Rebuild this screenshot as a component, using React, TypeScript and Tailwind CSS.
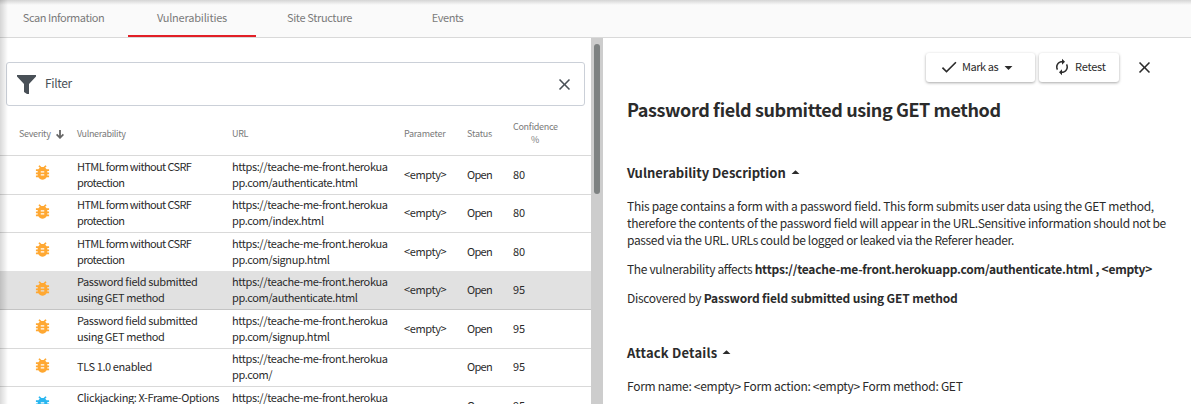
import React from "react";
import { MdArrowDropDown, MdArrowDropUp, MdAutorenew, MdCheck, MdClose } from "react-icons/md";

type Row = { name: string[]; url: string[]; param: string; confidence: string; tight?: boolean; info?: boolean; selected?: boolean };

const host = "https://teache-me-front.herokua";
const rows: Row[] = [
  { name: ["HTML form without CSRF", "protection"], url: [host, "pp.com/authenticate.html"], param: "<empty>", confidence: "80", tight: true },
  { name: ["HTML form without CSRF", "protection"], url: [host, "pp.com/index.html"], param: "<empty>", confidence: "80", tight: true },
  { name: ["HTML form without CSRF", "protection"], url: [host, "pp.com/signup.html"], param: "<empty>", confidence: "80", tight: true },
  { name: ["Password field submitted", "using GET method"], url: [host, "pp.com/authenticate.html"], param: "<empty>", confidence: "95", selected: true },
  { name: ["Password field submitted", "using GET method"], url: [host, "pp.com/signup.html"], param: "<empty>", confidence: "95" },
  { name: ["TLS 1.0 enabled"], url: [host, "pp.com/"], param: "", confidence: "95" },
  { name: ["Clickjacking: X-Frame-Options", "header missing"], url: [host, "pp.com/"], param: "", confidence: "95", info: true },
];

const tabs = [
  { label: "Scan Information", style: "pr-px tracking-[-0.44px]" },
  { label: "Vulnerabilities", style: "tracking-[-0.2px] border-b-2 border-[#e21f26]" },
  { label: "Site Structure", style: "pr-px tracking-[-0.36px]" },
  { label: "Events", style: "pr-px tracking-[-0.4px]" },
];

const columns = "grid grid-cols-[77px_155px_172px_63px_46px_78px] items-center";

function Bug({ className }: { className: string }) {
  return (
    <svg className={className} viewBox="0 0 24 24" fill="currentColor">
      <path d="M20.3 7.9h-3.1c-.45-.78-1.07-1.35-1.82-1.86L17.2 4.2 15.7 2.8l-2.28 2.37C12.96 5.06 12.49 5 12 5c-.49 0-.96.06-1.41.17L8.3 2.8 6.8 4.2l1.82 1.84C7.88 6.55 7.26 7.12 6.81 7.9H3.7v2.2h2.3c-.05.33-.1.66-.1.9v.9H3.7v2.2h2.2v.9c0 .34.05.67.1.9H3.7v2.2h3.11c1.04 1.79 2.97 3 5.19 3s4.15-1.21 5.19-3h3.11v-2.2h-2.3c.05-.33.1-.66.1-.9v-.9h2.2v-2.2h-2.2V11c0-.34-.05-.67-.1-.9h2.3V7.9zM14.2 15.7H9.8v-1.6h4.4v1.6zm0-3.8H9.8v-1.6h4.4v1.6z" />
    </svg>
  );
}

function Lines({ lines }: { lines: string[] }) {
  return (
    <div>
      {lines.map((line) => (
        <div key={line} className="whitespace-nowrap">{line}</div>
      ))}
    </div>
  );
}

function Tabs() {
  return (
    <nav className="flex h-[38px] shrink-0 border-b border-[#d9d9d9] bg-[#fafafa] text-[11px] leading-[35px] text-[#7a7a7a]">
      {tabs.map((tab) => (
        <div key={tab.label} className={`w-32 text-center ${tab.style}`}>{tab.label}</div>
      ))}
    </nav>
  );
}

function VulnerabilityList() {
  return (
    <section className="w-[591px] shrink-0 overflow-hidden">
      <div className="mt-6 ml-1.5 flex h-11 w-[579px] items-center rounded-[3px] border border-[#cbd0d8] pr-2.5 pl-2.5">
        <svg className="h-[19px] w-[19px] shrink-0" viewBox="0 0 19 19" fill="#495057">
          <path d="M0 0H19V1.5L12 9V19H10L7 17V9L0 1.5Z" />
        </svg>
        <span className="mb-0.5 ml-[9px] flex-1 text-[12px] tracking-[-0.35px] text-[#495057]">Filter</span>
        <MdClose className="h-[19px] w-[19px] text-[#495057]" />
      </div>
      <div className={`${columns} mt-0.5 h-[47px] text-[9px] leading-[13px] tracking-[-0.32px] text-[#7a7a7a]`}>
        <div className="flex items-center pt-1 pl-[19px]">
          Severity
          <svg className="mt-0.5 ml-[5px] h-[9px] w-2" viewBox="0 0 8 9" fill="none" stroke="#666666" strokeWidth="1.8">
            <path d="M4 0V8M.6 4.4L4 7.8L7.4 4.4" />
          </svg>
        </div>
        <div className="pt-1">Vulnerability</div>
        <div className="pt-1">URL</div>
        <div className="pt-1 tracking-[-0.24px]">Parameter</div>
        <div className="pt-1 tracking-[-0.2px]">Status</div>
        <div className="w-11 pt-0.5 text-center">Confidence %</div>
      </div>
      {rows.map((row, index) => (
        <div
          key={index}
          className={`${columns} h-[38.5px] border-t pb-0.5 text-[11px] leading-4 tracking-[-0.4px] text-[#2b2b2b] ${row.selected ? "border-[#e1e1e1] bg-[#e1e1e1]" : index === 4 ? "border-[#c4c4c4]" : "border-[#d9d9d9]"}`}
        >
          <Bug className={`mb-0.5 ml-[33px] h-[19px] w-[19px] ${row.info ? "text-[#29b6f0]" : "text-[#ffa832]"}`} />
          <div className={row.tight ? "tracking-[-0.62px]" : ""}>
            <Lines lines={row.name} />
          </div>
          <Lines lines={row.url} />
          <div>{row.param}</div>
          <div className="tracking-[-0.7px]">Open</div>
          <div className="tracking-[-0.2px]">{row.confidence}</div>
        </div>
      ))}
    </section>
  );
}

function Details() {
  return (
    <section className="flex-1 overflow-hidden pl-6 text-[12px] leading-[17px] tracking-[-0.29px] text-[#2b2b2b]">
      <div className="mt-3.5 flex h-[30px] items-center justify-end pr-[37px] text-[11px]">
        <div className="flex h-[29px] w-[109px] items-center rounded-[3px] pl-[13px] shadow-[0_1px_3px_rgba(0,0,0,0.35)]">
          <MdCheck className="h-5 w-5" />
          <span className="mb-px ml-[3px] tracking-[-0.45px]">Mark as</span>
          <MdArrowDropDown className="ml-px h-[19px] w-[19px]" />
        </div>
        <div className="ml-1 flex h-[29px] w-20 items-center rounded-[3px] pl-[14px] shadow-[0_1px_3px_rgba(0,0,0,0.35)]">
          <MdAutorenew className="h-[18px] w-[18px]" />
          <span className="mb-px ml-1 tracking-[-0.2px]">Retest</span>
        </div>
        <MdClose className="ml-4 h-[19px] w-[19px]" />
      </div>
      <h1 className="mt-[15px] text-[18px] leading-6 font-bold tracking-[-0.41px] whitespace-nowrap">Password field submitted using GET method</h1>
      <h2 className="mt-[43px] flex h-[17px] items-center text-[13px] font-bold tracking-normal">
        Vulnerability Description
        <MdArrowDropUp className="h-[19px] w-[19px]" />
      </h2>
      <div className="mt-4 whitespace-nowrap">
        <div className="tracking-[-0.28px]">This page contains a form with a password field. This form submits user data using the GET method,</div>
        <div className="tracking-[-0.31px]">therefore the contents of the password field will appear in the URL.Sensitive information should not be</div>
        <div className="tracking-[-0.35px]">passed via the URL. URLs could be logged or leaked via the Referer header.</div>
      </div>
      <p className="mt-3 whitespace-nowrap tracking-[-0.35px]">The vulnerability affects <b className="tracking-[-0.22px]">https://teache-me-front.herokuapp.com/authenticate.html , &lt;empty&gt;</b></p>
      <p className="mt-3 whitespace-nowrap">Discovered by <b className="tracking-[-0.15px]">Password field submitted using GET method</b></p>
      <h2 className="mt-[38px] flex h-[17px] items-center text-[13px] font-bold tracking-[0.18px]">
        Attack Details
        <MdArrowDropUp className="h-[19px] w-[19px]" />
      </h2>
      <p className="mt-4 whitespace-nowrap">Form name: &lt;empty&gt; Form action: &lt;empty&gt; Form method: GET</p>
    </section>
  );
}

export default function App() {
  return (
    <div className="relative flex h-[404px] w-[1191px] flex-col overflow-hidden bg-white font-['Noto_Sans_CJK_SC','Noto_Sans',sans-serif] [font-feature-settings:'liga'_1]">
      <Tabs />
      <main className="flex min-h-0 flex-1">
        <VulnerabilityList />
        <div className="w-3 shrink-0 bg-[#cdcdcd] px-[3px] pt-1.5">
          <div className="h-[150px] rounded-full bg-[#7e8282]" />
        </div>
        <Details />
      </main>
      <div className="pointer-events-none absolute inset-x-0 top-0 h-[5px] bg-linear-to-b from-black/15 to-transparent" />
      <div className="pointer-events-none absolute inset-y-0 left-0 w-2 bg-linear-to-r from-black/15 to-transparent" />
    </div>
  );
}
